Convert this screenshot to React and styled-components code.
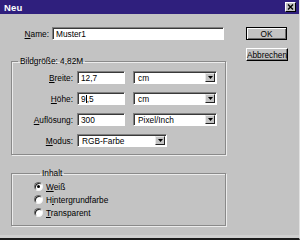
import React from "react";
import styled, { createGlobalStyle, css } from "styled-components";

const Global = createGlobalStyle`
  html, body { margin: 0; padding: 0; background: #c3c3c3; }
  body { font-family: "Liberation Sans", Arial, sans-serif; font-size: 8.3px; color: #000; }
  * { box-sizing: border-box; }
  u { text-decoration-thickness: 1px; text-underline-offset: 1px; }
`;

const Window = styled.div`
  width: 300px;
  height: 240px;
  background: #c3c3c3;
  display: flex;
  flex-direction: column;
  border-bottom: 2px solid #1c1c1c;
  border-right: 1px solid #e2e2e2;
  box-shadow: inset 0 -3px 0 #cfcfcf;
  overflow: hidden;
`;

const TitleBar = styled.div`
  height: 14px;
  flex: none;
  background: #2f1f7d;
  display: flex;
  align-items: center;
  justify-content: space-between;
  padding: 0 3px 0 4px;
`;

const Title = styled.span`
  color: #fff;
  font-weight: bold;
  font-size: 9.5px;
  letter-spacing: 0.2px;
`;

const CloseBtn = styled.div`
  width: 11px;
  height: 10px;
  background: #c3c3c3;
  border: 1px solid;
  border-color: #fff #000 #000 #fff;
  display: flex;
  align-items: center;
  justify-content: center;
`;

const Content = styled.div`
  display: flex;
  padding: 13px 0 0 11px;
`;

const LeftCol = styled.div`
  width: 215px;
  display: flex;
  flex-direction: column;
`;

const NameRow = styled.div`
  display: flex;
  align-items: center;
  height: 13px;
`;

const Label = styled.label`
  width: ${(p) => p.$w}px;
  flex: none;
  text-align: right;
  margin-right: ${(p) => p.$gap ?? 4}px;
  white-space: nowrap;
`;

const sunken = css`
  background: #fff;
  border: 1px solid;
  border-color: #808080 #fff #fff #808080;
  box-shadow: inset 1px 1px 0 #3a3a3a;
`;

const Input = styled.div`
  ${sunken};
  width: ${(p) => p.$w}px;
  height: 13px;
  flex: none;
  display: flex;
  align-items: center;
  padding-left: 3px;
  white-space: nowrap;
`;

const Caret = styled.span`
  display: inline-block;
  width: 1px;
  height: 8px;
  background: #000;
  margin: 0 0 0 0;
`;

const Select = styled.div`
  ${sunken};
  width: ${(p) => p.$w}px;
  margin-left: ${(p) => p.$ml ?? 0}px;
  height: 13px;
  flex: none;
  display: flex;
  align-items: center;
  justify-content: space-between;
  padding: 0 1px 0 4px;
  white-space: nowrap;
`;

const ArrowBtn = styled.div`
  width: 10px;
  height: 9px;
  background: #c3c3c3;
  border: 1px solid;
  border-color: #e8e8e8 #222 #222 #e8e8e8;
  display: flex;
  align-items: center;
  justify-content: center;
`;

const Group = styled.fieldset`
  margin: ${(p) => p.$mt}px 0 0 0;
  padding: ${(p) => p.$pt}px 0 ${(p) => p.$pb}px ${(p) => p.$pl}px;
  border: 1px solid #8a8a8a;
  box-shadow: inset 1px 1px 0 #ececec, 1px 1px 0 #ececec;
  min-width: 0;
`;

const Legend = styled.legend`
  margin-left: 6px;
  padding: 0 2px;
  line-height: 10px;
  font-size: 8.3px;
`;

const Rows = styled.div`
  display: flex;
  flex-direction: column;
  gap: ${(p) => p.$gap}px;
`;

const Row = styled.div`
  display: flex;
  align-items: center;
  height: ${(p) => p.$h ?? 13}px;
`;

const RadioCircle = styled.span`
  width: 9px;
  height: 9px;
  border-radius: 50%;
  background: #fff;
  border: 1px solid;
  border-color: #6a6a6a #f4f4f4 #f4f4f4 #6a6a6a;
  box-shadow: inset 1px 1px 0 #222;
  display: flex;
  align-items: center;
  justify-content: center;
  margin-right: 3px;
  flex: none;
  &::after {
    content: "";
    width: 3px;
    height: 3px;
    border-radius: 50%;
    background: ${(p) => (p.$on ? "#000" : "transparent")};
  }
`;

const RightCol = styled.div`
  margin-left: 20px;
  display: flex;
  flex-direction: column;
  gap: 8px;
`;

const Button = styled.div`
  width: ${(p) => p.$w}px;
  height: 13px;
  background: #c3c3c3;
  display: flex;
  align-items: center;
  justify-content: center;
  white-space: nowrap;
  ${(p) =>
    p.$default
      ? css`
          border: 1px solid #000;
          box-shadow: inset 1px 1px 0 #fff, inset -1px -1px 0 #6c6c6c;
        `
      : css`
          border: 1px solid;
          border-color: #fff #000 #000 #fff;
          box-shadow: inset -1px -1px 0 #7a7a7a;
        `}
`;

const Arrow = () => (
  <svg width="5" height="3" viewBox="0 0 5 3">
    <path d="M0 0h5L2.5 3z" fill="#000" />
  </svg>
);

const DropSelect = ({ w, ml, children }) => (
  <Select $w={w} $ml={ml}>
    <span>{children}</span>
    <ArrowBtn>
      <Arrow />
    </ArrowBtn>
  </Select>
);

const Radio = ({ on, children }) => (
  <Row>
    <RadioCircle $on={on} />
    <span>{children}</span>
  </Row>
);

export default function App() {
  return (
    <>
      <Global />
      <Window>
        <TitleBar>
          <Title>Neu</Title>
          <CloseBtn>
            <svg width="7" height="6" viewBox="0 0 7 6">
              <path d="M1 0.5l5 5M6 0.5l-5 5" stroke="#000" strokeWidth="1.4" />
            </svg>
          </CloseBtn>
        </TitleBar>
        <Content>
          <LeftCol>
            <NameRow>
              <Label $w={38} $gap={3}>
                <u>N</u>ame:
              </Label>
              <Input $w={172}>Muster1</Input>
            </NameRow>

            <Group $mt={16} $pt={5} $pb={7} $pl={0}>
              <Legend>Bildgröße: 4,82M</Legend>
              <Rows $gap={8}>
                <Row>
                  <Label $w={61}>
                    <u>B</u>reite:
                  </Label>
                  <Input $w={48}>12,7</Input>
                  <DropSelect w={84} ml={8}>cm</DropSelect>
                </Row>
                <Row>
                  <Label $w={61}>
                    <u>H</u>öhe:
                  </Label>
                  <Input $w={48}>
                    9<Caret />,5
                  </Input>
                  <DropSelect w={84} ml={8}>cm</DropSelect>
                </Row>
                <Row>
                  <Label $w={61}>
                    <u>A</u>uflösung:
                  </Label>
                  <Input $w={48}>300</Input>
                  <DropSelect w={84} ml={8}>Pixel/Inch</DropSelect>
                </Row>
                <Row>
                  <Label $w={61}>
                    <u>M</u>odus:
                  </Label>
                  <DropSelect w={90}>RGB-Farbe</DropSelect>
                </Row>
              </Rows>
            </Group>

            <Group $mt={13} $pt={2} $pb={6} $pl={22}>
              <Legend>Inhalt</Legend>
              <Rows $gap={0}>
                <Radio on>
                  <u>W</u>eiß
                </Radio>
                <Radio>
                  H<u>i</u>ntergrundfarbe
                </Radio>
                <Radio>
                  <u>T</u>ransparent
                </Radio>
              </Rows>
            </Group>
          </LeftCol>
          <RightCol>
            <Button $w={41} $default>
              OK
            </Button>
            <Button $w={42}>Abbrechen</Button>
          </RightCol>
        </Content>
      </Window>
    </>
  );
}
